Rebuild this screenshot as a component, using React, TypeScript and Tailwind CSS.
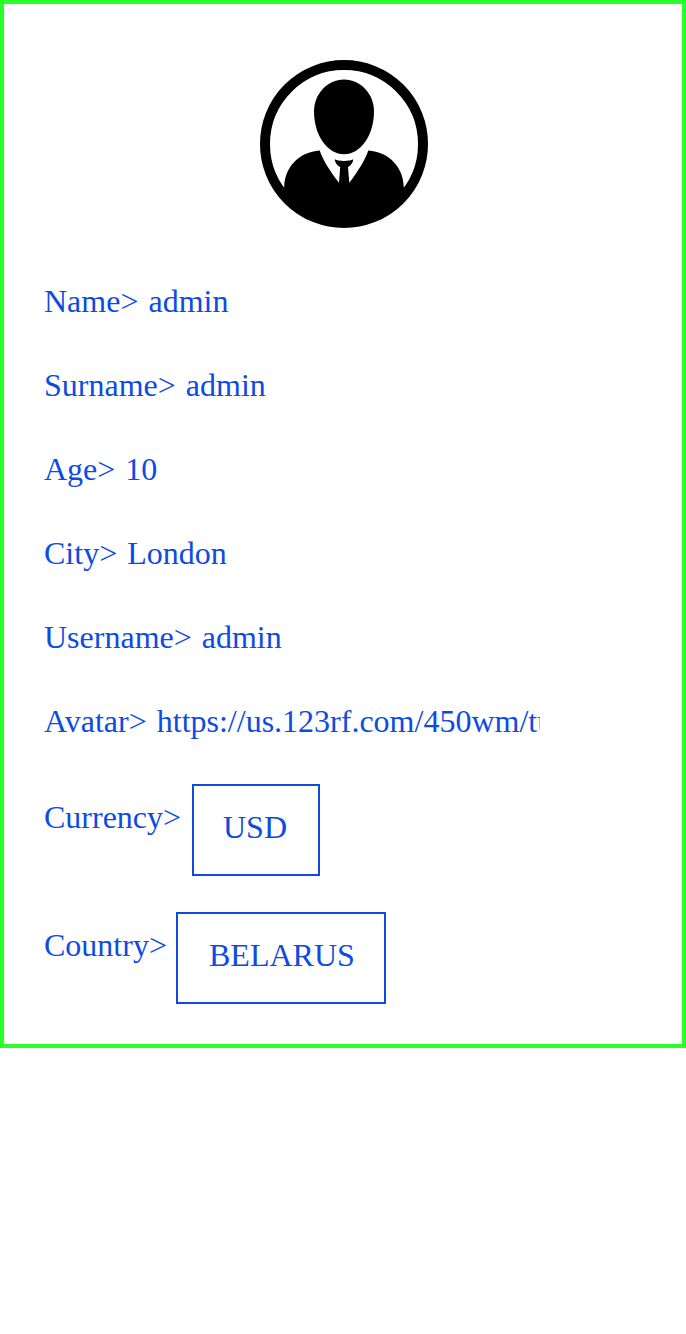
import React from "react";

const fields = [
  { label: "Name", value: "admin" },
  { label: "Surname", value: "admin" },
  { label: "Age", value: "10" },
  { label: "City", value: "London" },
  { label: "Username", value: "admin" },
  { label: "Avatar", value: "https://us.123rf.com/450wm/tuktukdesign" },
];

const choices = [
  { label: "Currency", value: "USD", labelWidth: "w-[148px]", box: "w-[128px] pl-[29px]" },
  { label: "Country", value: "BELARUS", labelWidth: "w-[132px]", box: "w-[210px] pl-[31px]" },
];

function Avatar() {
  return (
    <svg viewBox="0 0 168 168" className="h-[168px] w-[168px]" role="img">
      <defs>
        <clipPath id="disc">
          <circle cx="84" cy="84" r="80" />
        </clipPath>
      </defs>
      <circle cx="84" cy="84" r="79" fill="none" stroke="#000" strokeWidth="10" />
      <path d="M84 19.5C100.600 19.5 114 34 114 51.5C114 75.100 100.600 94.3 84 94.3C67.400 94.3 54 75.100 54 51.5C54 34 67.400 19.5 84 19.5Z" />
      <g clipPath="url(#disc)">
        <path d="M24.2 127.5C24.5 107 39 92 59.7 90.5C63 100 70 111.5 79 122.7L80.2 107C77.5 106 75 102.5 74.7 99.2C78 101.5 90 101.5 93.3 99.2C93 102.5 90.5 106 88 107L89.3 122.7C98 111.5 105 100 108.3 90.5C129 92 143.5 107 143.8 127.5L168 127.5V168H0V127.5Z" />
      </g>
    </svg>
  );
}

export default function App() {
  return (
    <main className="min-h-[1334px] bg-white font-['Liberation_Serif',serif] text-[32px] leading-9 text-[#0c4be4]">
      <section className="h-[1048px] border-4 border-[#29ff29] px-10 pt-14">
        <div className="flex justify-center pl-[2px]">
          <Avatar />
        </div>
        <div className="mt-[55px] flex flex-col gap-12">
          {fields.map(({ label, value }) => (
            <div key={label} className="flex h-9 gap-[10px]">
              <span>{label}&gt;</span>
              <span className="w-[383px] overflow-hidden whitespace-nowrap">{value}</span>
            </div>
          ))}
        </div>
        <div className="mt-[45px] flex flex-col gap-9">
          {choices.map(({ label, value, labelWidth, box }) => (
            <div key={label} className="flex h-[92px] items-start">
              <span className={`pt-[15px] ${labelWidth}`}>{label}&gt;</span>
              <button
                className={`flex h-[92px] items-start border-2 border-[#0c4be4] pt-[23px] leading-9 ${box}`}
              >
                {value}
              </button>
            </div>
          ))}
        </div>
      </section>
    </main>
  );
}
